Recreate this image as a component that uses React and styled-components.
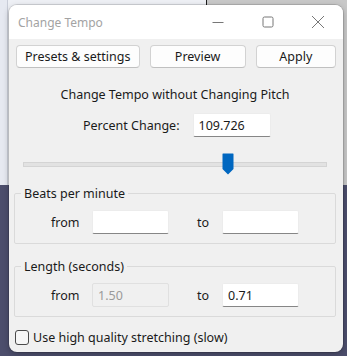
import React from 'react'
import styled, { createGlobalStyle } from 'styled-components'

const Global = createGlobalStyle`
  html, body { margin: 0; padding: 0; }
  body {
    width: 347px;
    height: 356px;
    overflow: hidden;
    font-family: "Noto Sans", "Liberation Sans", sans-serif;
    background:
      linear-gradient(to bottom, transparent 0 185px, #4c4e6c 185px),
      linear-gradient(to right, #e6e9f1 0 7px, #c9cdd8 7px 8px, #eef0f5 8px 206px, #1c1c1c 206px 207px, #c8c8c8 207px);
  }
`

const Window = styled.div`
  margin: 5px 4px 0 9px;
  width: 334px;
  height: 347px;
  border-radius: 8px;
  overflow: hidden;
  background: #f0f0f0;
  box-shadow: 0 0 0 1px rgba(0, 0, 0, 0.12), 0 2px 6px rgba(0, 0, 0, 0.25);
  display: flex;
  flex-direction: column;
`

const TitleBar = styled.div`
  height: 34px;
  background: #ffffff;
  display: flex;
  align-items: center;
  padding-left: 9px;
`

const Title = styled.div`
  flex: 1;
  font-size: 12px;
  color: #a3a3a3;
`

const Control = styled.div`
  width: 50px;
  height: 34px;
  display: flex;
  align-items: center;
  justify-content: center;
  color: #777;
`

const Body = styled.div`
  flex: 1;
  display: flex;
  flex-direction: column;
  padding: 6px 7px 0 5px;
  color: #1a1a1a;
  font-size: 12px;
`

const ButtonRow = styled.div`
  display: flex;
  gap: 10px;
  padding-left: 2px;
`

const Button = styled.div`
  width: ${p => p.w}px;
  height: 21px;
  border: 1px solid #d2d2d2;
  border-bottom-color: #c0c0c0;
  border-radius: 4px;
  background: #fdfdfd;
  display: flex;
  align-items: center;
  justify-content: center;
  font-size: 12.5px;
`

const Heading = styled.div`
  margin-top: 18px;
  text-align: center;
  font-size: 12.5px;
  line-height: 17px;
`

const PercentRow = styled.div`
  margin-top: 10px;
  display: flex;
  align-items: center;
  padding-left: 69px;
  gap: 13px;
  font-size: 12.5px;
`

const Input = styled.div`
  width: ${p => p.w || 77}px;
  height: 24px;
  box-sizing: border-box;
  background: ${p => (p.disabled ? '#f0f0f0' : '#ffffff')};
  border: 1px solid ${p => (p.disabled ? '#e0e0e0' : '#ececec')};
  border-bottom: 1px solid ${p => (p.disabled ? '#e0e0e0' : '#868686')};
  border-radius: 2px;
  color: ${p => (p.disabled ? '#9a9a9a' : '#1a1a1a')};
  font-size: 12.5px;
  padding-left: 5px;
  display: flex;
  align-items: center;
`

const SliderRow = styled.div`
  margin-top: 16px;
  height: 22px;
  padding: 0 9px 0 9px;
  display: flex;
  align-items: center;
`

const Track = styled.div`
  flex: 1;
  height: 3px;
  background: #e2e2e2;
  border: 1px solid #d4d4d4;
  display: flex;
  align-items: center;
`

const Thumb = styled.svg`
  margin-left: ${p => p.at}px;
  flex-shrink: 0;
`

const Group = styled.fieldset`
  margin: ${p => p.top}px 0 0 0;
  border: 1px solid #dadada;
  border-radius: 2px;
  padding: 8px 0 9px 0;
  min-width: 0;
`

const Legend = styled.legend`
  margin-left: 6px;
  padding: 0 3px;
  font-size: 12.5px;
`

const FieldRow = styled.div`
  display: flex;
  align-items: center;
`

const FieldLabel = styled.span`
  width: ${p => p.w}px;
  padding-left: ${p => p.pad}px;
  box-sizing: border-box;
  font-size: 12.5px;
`

const CheckRow = styled.label`
  margin-top: 12px;
  padding-left: 1px;
  display: flex;
  align-items: center;
  gap: 4px;
  font-size: 12.5px;
`

const Box = styled.span`
  width: 12px;
  height: 13px;
  border: 1px solid #4a4a4a;
  border-radius: 3px;
  background: #f6f6f6;
`

function RangeFields({ from, to, fromDisabled }) {
  return (
    <FieldRow>
      <FieldLabel w={77} pad={36}>from</FieldLabel>
      <Input w={77} disabled={fromDisabled}>{from}</Input>
      <FieldLabel w={53} pad={28}>to</FieldLabel>
      <Input w={77}>{to}</Input>
    </FieldRow>
  )
}

export default function App() {
  return (
    <>
      <Global />
      <Window>
        <TitleBar>
          <Title>Change Tempo</Title>
          <Control>
            <svg width="12" height="12" viewBox="0 0 12 12">
              <path d="M0.5 6.5h11" stroke="#777" strokeWidth="1" />
            </svg>
          </Control>
          <Control>
            <svg width="12" height="12" viewBox="0 0 12 12">
              <rect x="1" y="1" width="10" height="10" rx="1.5" fill="none" stroke="#777" strokeWidth="1" />
            </svg>
          </Control>
          <Control>
            <svg width="14" height="14" viewBox="0 0 14 14">
              <path d="M1 1L13 13M13 1L1 13" stroke="#777" strokeWidth="1" />
            </svg>
          </Control>
        </TitleBar>
        <Body>
          <ButtonRow>
            <Button w={124}>Presets &amp; settings</Button>
            <Button w={96}>Preview</Button>
            <Button w={80}>Apply</Button>
          </ButtonRow>
          <Heading>Change Tempo without Changing Pitch</Heading>
          <PercentRow>
            <span>Percent Change:</span>
            <Input w={78}>109.726</Input>
          </PercentRow>
          <SliderRow>
            <Track>
              <Thumb at={198} width="12" height="22" viewBox="0 0 12 22">
                <path d="M1 0.5h10a0.5 0.5 0 0 1 0.5 0.5v15L6 21.5 0.5 16V1a0.5 0.5 0 0 1 0.5-0.5z" fill="#0067c0" />
              </Thumb>
            </Track>
          </SliderRow>
          <Group top={10}>
            <Legend>Beats per minute</Legend>
            <RangeFields from="" to="" />
          </Group>
          <Group top={14}>
            <Legend>Length (seconds)</Legend>
            <RangeFields from="1.50" to="0.71" fromDisabled />
          </Group>
          <CheckRow>
            <Box />
            <span>Use high quality stretching (slow)</span>
          </CheckRow>
        </Body>
      </Window>
    </>
  )
}
